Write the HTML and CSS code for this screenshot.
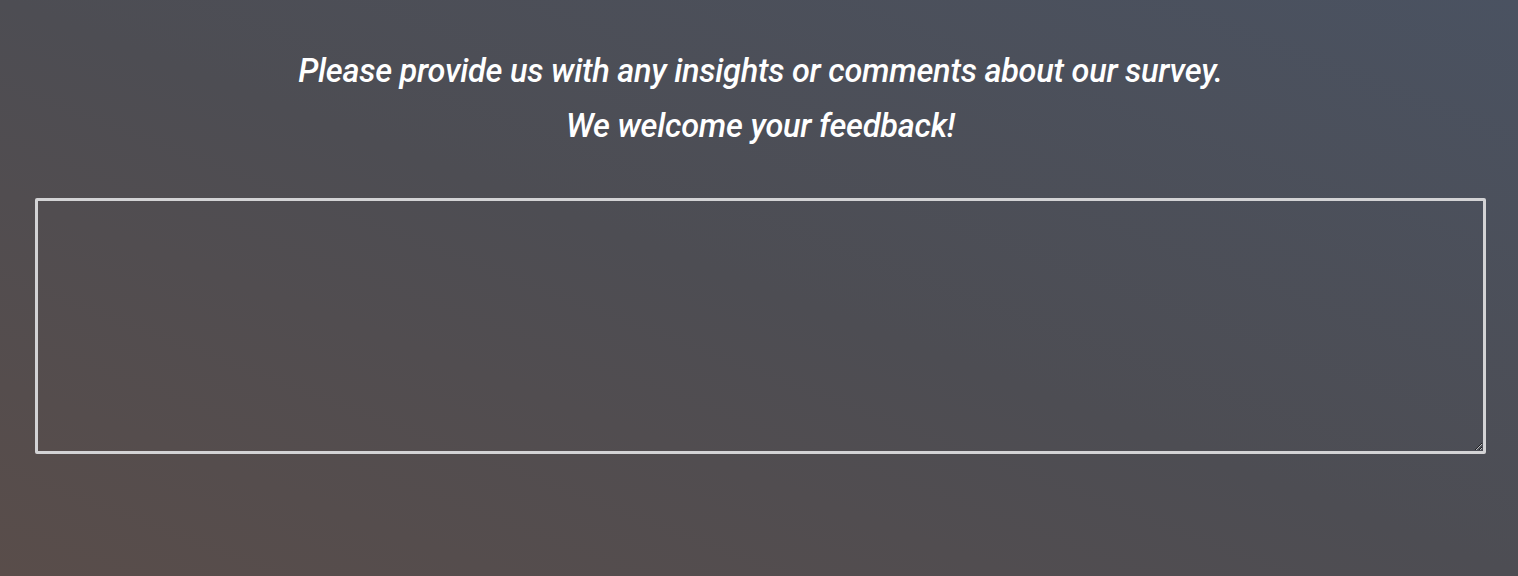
FILE: index.html
```html
<!DOCTYPE html>
<html>
<head>
<meta charset="utf-8">
<link rel="stylesheet" href="styles.css">
</head>
<body>
<main class="survey">
  <div class="intro">
    <p class="line">Please provide us with any insights or comments about our survey.</p>
    <p class="line">We welcome your feedback!</p>
  </div>
  <textarea class="feedback"></textarea>
</main>
</body>
</html>
```
FILE: styles.css
```css
html, body {
  margin: 0;
  height: 100%;
}
body {
  background: linear-gradient(to top right, #594d4a 0%, #4d4d53 50%, #4a5261 100%);
  font-family: Roboto, "Noto Sans", sans-serif;
  overflow: hidden;
}
.survey {
  display: flex;
  flex-direction: column;
  align-items: stretch;
  padding: 52px 32px 0 35px;
}
.intro {
  display: flex;
  flex-direction: column;
  align-items: center;
  gap: 17px;
}
.line {
  margin: 0;
  color: #ffffff;
  font-style: italic;
  font-weight: 500;
  font-size: 32.5px;
  line-height: 38px;
  letter-spacing: -0.25px;
}
.feedback {
  margin-top: 53px;
  height: 256px;
  box-sizing: border-box;
  background: transparent;
  border: 3px solid #d3d3d5;
  border-radius: 2px;
  outline: none;
  resize: vertical;
  color: #fff;
}
```
